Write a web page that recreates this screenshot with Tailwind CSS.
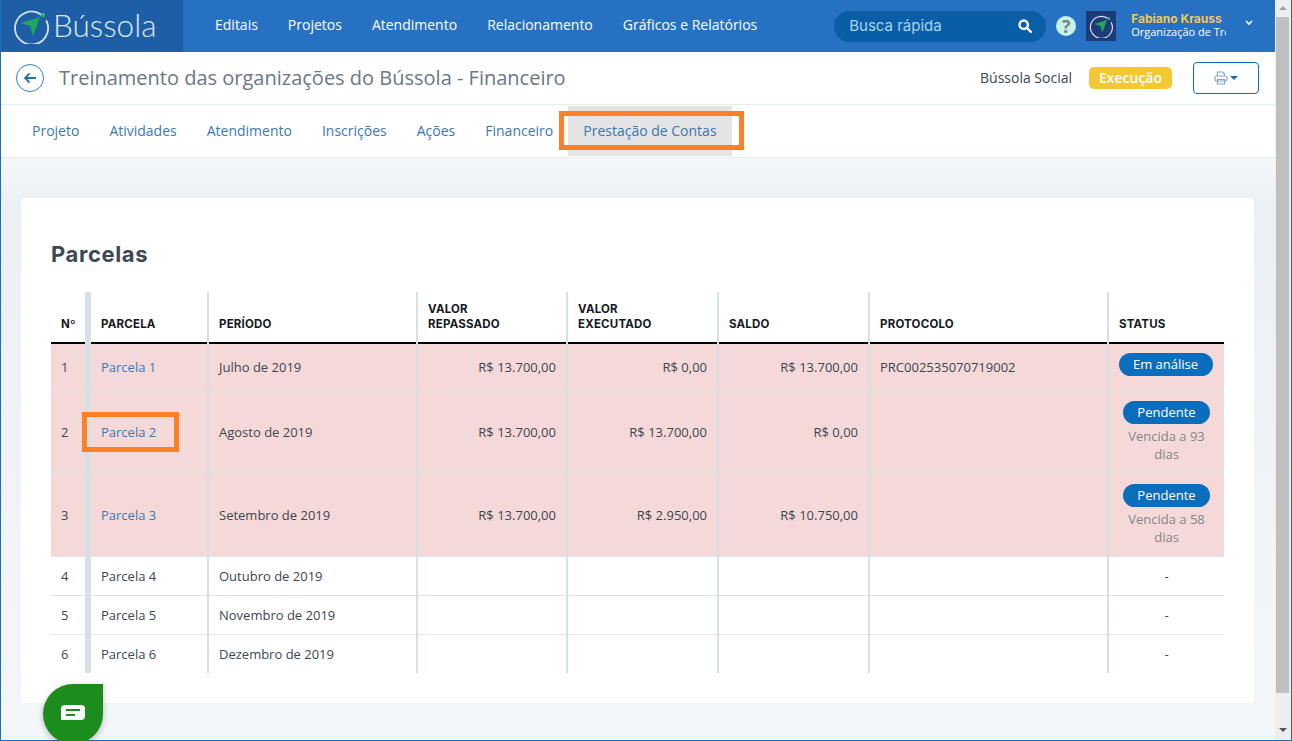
<!DOCTYPE html>
<html lang="pt-BR">
<head>
<meta charset="UTF-8">
<title>Bússola - Prestação de Contas</title>
<script src="https://cdn.jsdelivr.net/npm/@tailwindcss/browser@4"></script>
</head>
<body class="h-[741px] w-[1292px] overflow-hidden font-['Open_Sans',sans-serif] text-[13px] text-[#3c4650]">
<div class="relative flex h-[741px] w-[1292px] border-x border-b border-[#1a6fbd]">
  <div class="flex h-full w-[1274px] flex-col bg-gradient-to-b from-[#f4f8fb] from-[21%] via-[#ebf0f4] via-[28%] to-[#f4f7fa]">

    <!-- top bar -->
    <header class="flex h-[52px] shrink-0 items-center bg-[#2771c3] text-white">
      <div class="flex h-full w-[182px] items-center gap-[4px] bg-[#1e5ea6] pl-[12px]">
        <svg width="36" height="36" viewBox="0 0 36 36" fill="none">
          <path d="M28 6.5A16.5 16.5 0 1 0 33.5 13" stroke="#d5e2ef" stroke-width="1.8" stroke-linecap="round"/>
          <circle cx="30" cy="7" r="2.2" fill="#22b573"/>
          <path d="M8 15 L27 9 L20 28 L17 18 Z" fill="#1fa85a"/>
        </svg>
        <span class="font-['Lato',sans-serif] text-[31.5px] font-light text-[#dfe9f3]">Bússola</span>
      </div>
      <nav class="ml-[32px] flex gap-[30px] pb-[4px] text-[14px]">
        <span>Editais</span><span>Projetos</span><span>Atendimento</span><span>Relacionamento</span><span>Gráficos e Relatórios</span>
      </nav>
      <div class="ml-[77px] flex h-[31px] w-[212px] items-center justify-between rounded-full bg-[#0a5ea8] pl-[15px] pr-[14px]">
        <span class="font-['Inter',sans-serif] text-[15px] text-[#a9d3ee]">Busca rápida</span>
        <svg width="14" height="14" viewBox="0 0 14 14" fill="none" stroke="#fff" stroke-width="2.4"><circle cx="5.7" cy="5.7" r="4.2"/><path d="M9 9l4 4" stroke-linecap="round"/></svg>
      </div>
      <div class="ml-[10px] flex h-[20px] w-[20px] items-center justify-center rounded-full bg-[#c5f3ea] text-[18px] font-bold text-[#7f7f7f]">?</div>
      <div class="ml-[10px] flex h-[30px] w-[30px] items-center justify-center bg-[#1e3a78]">
        <svg width="24" height="24" viewBox="0 0 36 36" fill="none">
          <path d="M28 6.5A16.5 16.5 0 1 0 33.5 13" stroke="#d5e2ef" stroke-width="1.8" stroke-linecap="round"/>
          <circle cx="30" cy="7" r="2.2" fill="#22b573"/>
          <path d="M8 15 L27 9 L20 28 L17 18 Z" fill="#1fa85a"/>
        </svg>
      </div>
      <div class="ml-[15px] w-[95px] overflow-hidden whitespace-nowrap pb-[3px] leading-[13px]">
        <div class="font-['Inter',sans-serif] text-[12px] font-bold text-[#f1c74f]">Fabiano Krauss</div>
        <div class="text-[11px] font-medium">Organização de Treinamento</div>
      </div>
      <svg class="ml-[19px] -translate-y-[3px]" width="8" height="6" viewBox="0 0 8 6" fill="none" stroke="#fff" stroke-width="1.6"><path d="M1 1l3 3 3-3"/></svg>
    </header>

    <!-- project title -->
    <div class="flex h-[53px] shrink-0 items-center border-b border-[#e0eff3] bg-white pl-[15px] pr-[16px]">
      <div class="flex h-[28px] w-[28px] items-center justify-center rounded-full border border-[#2f80c8]">
        <svg width="14" height="12" viewBox="0 0 14 12" fill="none" stroke="#2a6fb5" stroke-width="1.8"><path d="M13 6H2M6.5 1.5L2 6l4.5 4.5"/></svg>
      </div>
      <h1 class="ml-[15px] text-[20px] text-[#6b7785]">Treinamento das organizações do Bússola - Financeiro</h1>
      <span class="ml-auto pb-[2px] text-[14px] text-[#3c4650]">Bússola Social</span>
      <span class="ml-[17px] flex h-[22px] w-[83px] items-center justify-center rounded-[5px] bg-[#f4c833] pb-[2px] text-[14px] font-semibold text-white">Execução</span>
      <button class="ml-[21px] flex h-[32px] w-[66px] items-center justify-center gap-[2px] rounded-[4px] border border-[#0a6ebd] bg-white">
        <svg width="14" height="14" viewBox="0 0 14 14" fill="none" stroke="#7fa6d6" stroke-width="1.2"><path d="M3.5 5V1h5l2 2v2"/><rect x="1" y="5" width="12" height="5" rx="1.5"/><path d="M3.5 8.5h7V13h-7z"/></svg>
        <span class="h-0 w-0 border-x-[4px] border-t-[4px] border-x-transparent border-t-[#0a6ebd]"></span>
      </button>
    </div>

    <!-- tabs -->
    <div class="flex h-[53px] shrink-0 items-center border-b border-[#e0eff3] bg-white pl-[16px] text-[14px] text-[#3a78b5]">
      <span class="px-[15px] pb-[2px]">Projeto</span>
      <span class="px-[15px] pb-[2px]">Atividades</span>
      <span class="px-[15px] pb-[2px]">Atendimento</span>
      <span class="px-[15px] pb-[2px]">Inscrições</span>
      <span class="px-[15px] pb-[2px]">Ações</span>
      <span class="px-[15px] pb-[2px]">Financeiro</span>
      <span class="flex h-[50px] items-center bg-[#e4e4e4] px-[15px] pb-[2px]">Prestação de Contas</span>
    </div>

    <!-- card -->
    <main class="ml-[20px] mr-[21px] mt-[40px] h-[505px] rounded-[4px] bg-white px-[30px] pt-[41px]">
      <h2 class="font-['Inter',sans-serif] text-[22px] font-bold leading-[30px] tracking-[0.6px] text-[#3d4852]">Parcelas</h2>
      <table class="mt-[23px] w-[1173px] table-fixed border-collapse">
        <colgroup>
          <col class="w-[37px]"><col class="w-[120px]"><col class="w-[209px]"><col class="w-[150px]"><col class="w-[151px]"><col class="w-[151px]"><col class="w-[239px]"><col class="w-[116px]">
        </colgroup>
        <thead class="font-['Inter',sans-serif] text-[11.5px] font-bold leading-[15px] tracking-[0.2px] text-[#15191d]">
          <tr class="h-[51px] border-b-2 border-black align-bottom">
            <th class="pb-[10px] pl-[10px] text-left font-bold">Nº</th>
            <th class="border-l-[6px] border-[#d7e0e3] pb-[10px] pl-[10px] text-left font-bold">PARCELA</th>
            <th class="border-l-2 border-[#d7e0e3] pb-[10px] pl-[10px] text-left font-bold">PERÍODO</th>
            <th class="border-l-2 border-[#d7e0e3] pb-[10px] pl-[10px] text-left font-bold">VALOR<br>REPASSADO</th>
            <th class="border-l-2 border-[#d7e0e3] pb-[10px] pl-[10px] text-left font-bold">VALOR<br>EXECUTADO</th>
            <th class="border-l-2 border-[#d7e0e3] pb-[10px] pl-[10px] text-left font-bold">SALDO</th>
            <th class="border-l-2 border-[#d7e0e3] pb-[10px] pl-[10px] text-left font-bold">PROTOCOLO</th>
            <th class="border-l-2 border-[#d7e0e3] pb-[10px] pl-[10px] text-left font-bold">STATUS</th>
          </tr>
        </thead>
        <tbody>
          <tr class="h-[47px] border-b border-[#e0e6ea] bg-[#f5d9d9]">
            <td class="pl-[10px] pt-[1px]">1</td>
            <td class="border-l-[6px] border-[#d7e0e3] pl-[10px] pt-[1px] text-[#3a78b5]">Parcela 1</td>
            <td class="border-l-2 border-[#d7e0e3] pl-[10px] pt-[1px]">Julho de 2019</td>
            <td class="border-l-2 border-[#d7e0e3] pr-[10px] pt-[1px] text-right">R$ 13.700,00</td>
            <td class="border-l-2 border-[#d7e0e3] pr-[10px] pt-[1px] text-right">R$ 0,00</td>
            <td class="border-l-2 border-[#d7e0e3] pr-[10px] pt-[1px] text-right">R$ 13.700,00</td>
            <td class="border-l-2 border-[#d7e0e3] pl-[10px] pt-[1px]">PRC002535070719002</td>
            <td class="border-l-2 border-[#d7e0e3] pb-[4px] pr-[2px] text-center"><span class="inline-block h-[23px] w-[94px] rounded-full bg-[#0a6ebd] leading-[23px] text-white">Em análise</span></td>
          </tr>
          <tr class="h-[83px] border-b border-[#e0e6ea] bg-[#f5d9d9]">
            <td class="pl-[10px] pt-[2px]">2</td>
            <td class="border-l-[6px] border-[#d7e0e3] pl-[10px] pt-[2px] text-[#3a78b5]">Parcela 2</td>
            <td class="border-l-2 border-[#d7e0e3] pl-[10px] pt-[2px]">Agosto de 2019</td>
            <td class="border-l-2 border-[#d7e0e3] pr-[10px] pt-[2px] text-right">R$ 13.700,00</td>
            <td class="border-l-2 border-[#d7e0e3] pr-[10px] pt-[2px] text-right">R$ 13.700,00</td>
            <td class="border-l-2 border-[#d7e0e3] pr-[10px] pt-[2px] text-right">R$ 0,00</td>
            <td class="border-l-2 border-[#d7e0e3] pl-[10px]"></td>
            <td class="border-l-2 border-[#d7e0e3] text-center">
              <span class="inline-block h-[23px] rounded-full bg-[#0a6ebd] px-[14px] leading-[23px] text-white">Pendente</span>
              <div class="mx-auto mt-[3px] w-[90px] leading-[18px] text-[#858585]">Vencida a 93 dias</div>
            </td>
          </tr>
          <tr class="h-[83px] border-b border-[#e0e6ea] bg-[#f5d9d9]">
            <td class="pl-[10px] pt-[2px]">3</td>
            <td class="border-l-[6px] border-[#d7e0e3] pl-[10px] pt-[2px] text-[#3a78b5]">Parcela 3</td>
            <td class="border-l-2 border-[#d7e0e3] pl-[10px] pt-[2px]">Setembro de 2019</td>
            <td class="border-l-2 border-[#d7e0e3] pr-[10px] pt-[2px] text-right">R$ 13.700,00</td>
            <td class="border-l-2 border-[#d7e0e3] pr-[10px] pt-[2px] text-right">R$ 2.950,00</td>
            <td class="border-l-2 border-[#d7e0e3] pr-[10px] pt-[2px] text-right">R$ 10.750,00</td>
            <td class="border-l-2 border-[#d7e0e3] pl-[10px]"></td>
            <td class="border-l-2 border-[#d7e0e3] text-center">
              <span class="inline-block h-[23px] rounded-full bg-[#0a6ebd] px-[14px] leading-[23px] text-white">Pendente</span>
              <div class="mx-auto mt-[3px] w-[90px] leading-[18px] text-[#858585]">Vencida a 58 dias</div>
            </td>
          </tr>
          <tr class="h-[39px] border-b border-[#e0e6ea]">
            <td class="pl-[10px] pt-[2px]">4</td>
            <td class="border-l-[6px] border-[#d7e0e3] pl-[10px] pt-[2px]">Parcela 4</td>
            <td class="border-l-2 border-[#d7e0e3] pl-[10px] pt-[2px]">Outubro de 2019</td>
            <td class="border-l-2 border-[#d7e0e3]"></td>
            <td class="border-l-2 border-[#d7e0e3]"></td>
            <td class="border-l-2 border-[#d7e0e3]"></td>
            <td class="border-l-2 border-[#d7e0e3]"></td>
            <td class="border-l-2 border-[#d7e0e3] pt-[2px] text-center">-</td>
          </tr>
          <tr class="h-[39px] border-b border-[#e0e6ea]">
            <td class="pl-[10px] pt-[2px]">5</td>
            <td class="border-l-[6px] border-[#d7e0e3] pl-[10px] pt-[2px]">Parcela 5</td>
            <td class="border-l-2 border-[#d7e0e3] pl-[10px] pt-[2px]">Novembro de 2019</td>
            <td class="border-l-2 border-[#d7e0e3]"></td>
            <td class="border-l-2 border-[#d7e0e3]"></td>
            <td class="border-l-2 border-[#d7e0e3]"></td>
            <td class="border-l-2 border-[#d7e0e3]"></td>
            <td class="border-l-2 border-[#d7e0e3] pt-[2px] text-center">-</td>
          </tr>
          <tr class="h-[39px]">
            <td class="pl-[10px] pt-[2px]">6</td>
            <td class="border-l-[6px] border-[#d7e0e3] pl-[10px] pt-[2px]">Parcela 6</td>
            <td class="border-l-2 border-[#d7e0e3] pl-[10px] pt-[2px]">Dezembro de 2019</td>
            <td class="border-l-2 border-[#d7e0e3]"></td>
            <td class="border-l-2 border-[#d7e0e3]"></td>
            <td class="border-l-2 border-[#d7e0e3]"></td>
            <td class="border-l-2 border-[#d7e0e3]"></td>
            <td class="border-l-2 border-[#d7e0e3] pt-[2px] text-center">-</td>
          </tr>
        </tbody>
      </table>
    </main>
  </div>

  <!-- scrollbar -->
  <div class="flex h-full w-[16px] flex-col items-center bg-[#eeeeee]">
    <span class="mt-[6px] h-0 w-0 border-x-[4px] border-b-[4px] border-x-transparent border-b-[#a3a3a3]"></span>
    <div class="ml-[1px] mt-[7px] h-[676px] w-[13px] self-start bg-[#bfbfbf]"></div>
    <span class="mb-[8px] mt-auto h-0 w-0 border-x-[4px] border-t-[4px] border-x-transparent border-t-[#555555]"></span>
  </div>

  <!-- annotation boxes -->
  <div class="absolute left-[558px] top-[111px] h-[39px] w-[185px] border-[5px] border-[#ff7f27]"></div>
  <div class="absolute left-[81px] top-[412px] h-[40px] w-[97px] border-[5px] border-[#ff7f27]"></div>

  <!-- chat button -->
  <div class="absolute left-[42px] top-[684px] flex h-[60px] w-[60px] items-center justify-center rounded-full rounded-tr-[8px] bg-[#1c8c1c] shadow-[0_2px_6px_rgba(0,0,0,0.25)]">
    <svg width="24" height="18" viewBox="0 0 24 18"><path d="M4 0h16a4 4 0 0 1 4 4v7a4 4 0 0 1-4 4H1a1 1 0 0 1-1-1V4a4 4 0 0 1 4-4z" fill="#fff"/><path d="M5 5h14M5 10h9" stroke="#1c8c1c" stroke-width="2"/></svg>
  </div>
</div>
</body>
</html>
